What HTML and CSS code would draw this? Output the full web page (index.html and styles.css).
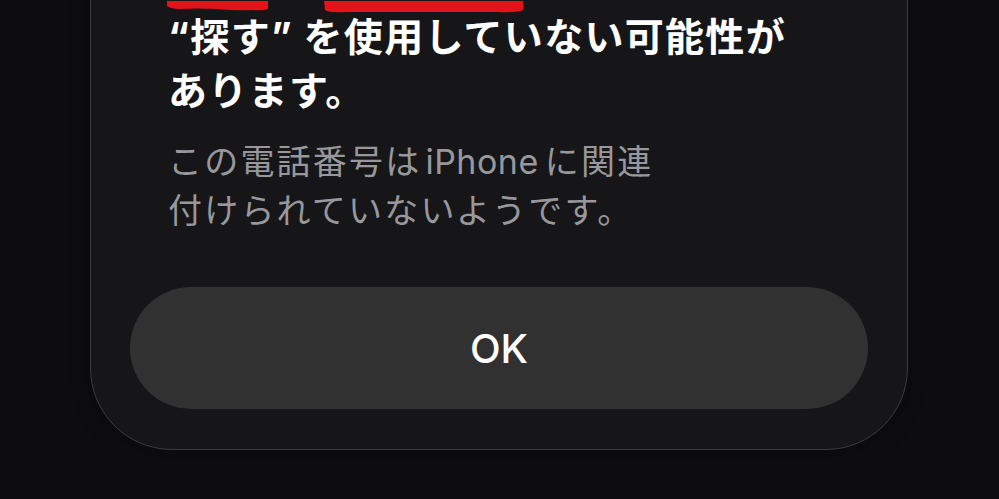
FILE: index.html
```html
<!DOCTYPE html>
<html lang="ja">
<head>
<meta charset="utf-8">
<link rel="stylesheet" href="styles.css">
</head>
<body>
<div class="card">
  <svg class="redact" width="360" height="14" viewBox="0 0 360 14">
    <path d="M0 0 H101 V8 Q96 10 86 9 Q70 10 50 8 Q30 7 12 8 Q4 8 0 5 Z" fill="#e3121b"/>
    <path d="M157 0 H356 V9 Q350 12 330 11 H180 Q162 12 158 9 Z" fill="#e3121b"/>
  </svg>
  <div class="texts">
    <h1 class="title">“探す” を使用していない可能性が<br>あります。</h1>
    <p class="message">この電話番号は<span class="latin">iPhone</span>に関連<br>付けられていないようです。</p>
  </div>
  <button class="ok">OK</button>
</div>
</body>
</html>
```
FILE: styles.css
```css
html, body {
  margin: 0;
  padding: 0;
  height: 100%;
  background: #0d0d0f;
  overflow: hidden;
  font-family: "Inter", "Noto Sans CJK JP", sans-serif;
}
.card {
  position: relative;
  box-sizing: border-box;
  width: 818px;
  margin-left: 90px;
  margin-top: -100px;
  padding: 109px 39px 40px;
  background: #161618;
  border: 1px solid #3c3c3f;
  border-radius: 0 0 82px 82px;
  box-shadow: 0 4px 20px rgba(0,0,0,0.25);
}
.redact {
  position: absolute;
  left: 76px;
  top: 100px;
}
.texts {
  padding-left: 38px;
}
.title {
  margin: 0;
  color: #ffffff;
  font-family: "Inter", "Noto Sans CJK JP", sans-serif;
  font-weight: 700;
  font-size: 39px;
  line-height: 54px;
  letter-spacing: 1.3px;
}
.message {
  margin: 19px 0 0;
  color: #98989c;
  font-weight: 400;
  font-size: 34px;
  line-height: 49px;
  letter-spacing: 2.2px;
}
.latin {
  margin: 0 6px 0 4px;
  letter-spacing: 0.5px;
}
.ok {
  display: block;
  width: 100%;
  height: 122px;
  margin-top: 52px;
  border: none;
  border-radius: 61px;
  background: #313131;
  color: #ffffff;
  font-family: "Inter", "Noto Sans CJK JP", sans-serif;
  font-size: 40px;
  font-weight: 500;
  padding: 0;
}
```
